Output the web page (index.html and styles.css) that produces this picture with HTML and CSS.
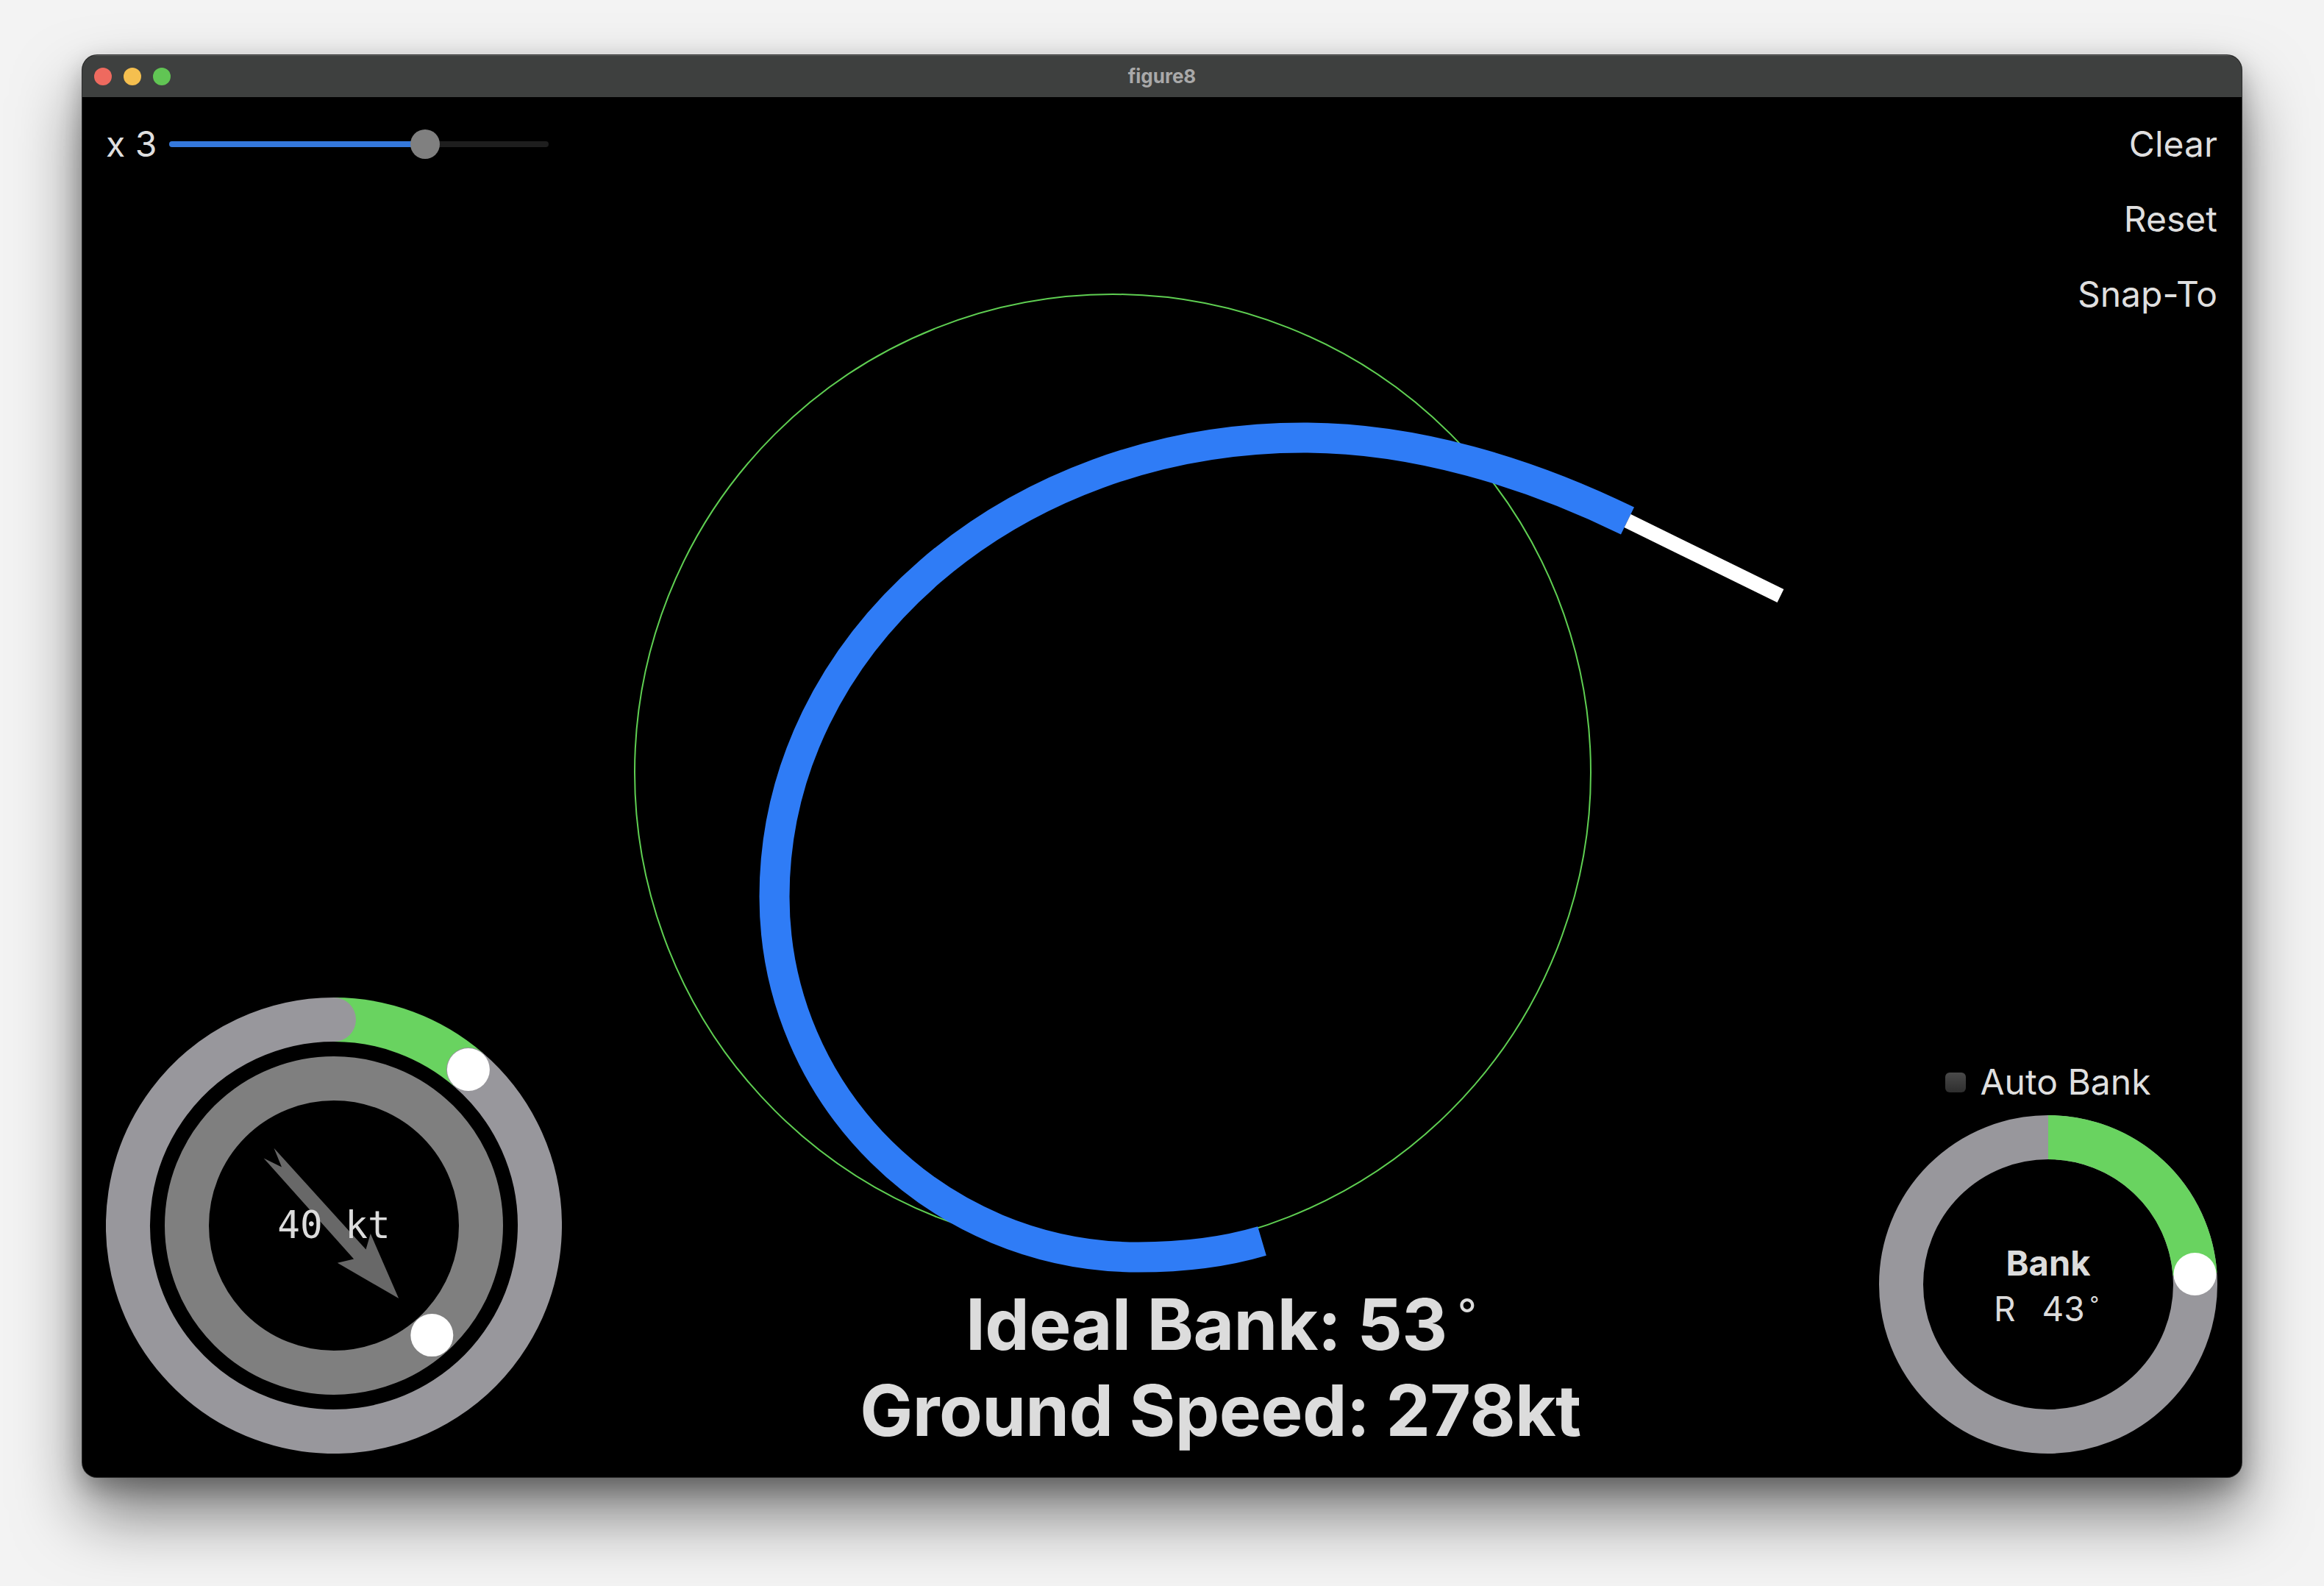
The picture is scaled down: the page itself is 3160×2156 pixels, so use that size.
FILE: index.html
```html
<!DOCTYPE html>
<html lang="en">
<head>
<meta charset="utf-8">
<title>figure8</title>
<link rel="stylesheet" href="styles.css">
</head>
<body>
<div class="window">
  <div class="titlebar">
    <div class="lights">
      <span class="light red"></span>
      <span class="light yellow"></span>
      <span class="light green"></span>
    </div>
    <div class="title">figure8</div>
    <div></div>
  </div>
  <div class="content">
    <svg class="canvas" viewBox="112 132 2936 1876" xmlns="http://www.w3.org/2000/svg">
      <circle class="target-circle" cx="1513" cy="1050" r="650"/>
      <path class="track" d="M1716 1687 C1662 1703 1604 1709 1548 1709 C1275 1709 1053 1490 1053 1219 C1053 874 1375 595 1773 595 C1923 595 2078 642 2213 708"/>
      <path class="heading" d="M2213 708 L2421 810"/>
    </svg>

    <div class="top-row">
      <div class="speed-control">
        <span class="mult">x 3</span>
        <div class="slider">
          <div class="slider-track"><div class="slider-fill" style="width:348px"></div></div>
          <div class="slider-thumb" style="left:328px"></div>
        </div>
      </div>
      <div class="actions">
        <button class="action">Clear</button>
        <button class="action">Reset</button>
        <button class="action">Snap-To</button>
      </div>
    </div>

    <div class="bottom-row">
      <div class="wind-gauge">
        <svg class="gauge-svg" viewBox="0 0 620 620" xmlns="http://www.w3.org/2000/svg">
          <path class="arc-green" d="M310 30 A280 280 0 0 1 492.9 98"/>
          <path class="arc-gray round" d="M492.9 98 A280 280 0 1 1 310 30"/>
          <circle class="ring-mid" cx="310" cy="310" r="200"/>
          <polygon class="wind-arrow" points="228.5,204.8 353.5,342.4 359.8,321 398.1,409 314.8,360.8 337.1,355.6 214.6,218.4 239,230.4"/>
          <circle class="knob" cx="492.9" cy="98" r="29"/>
          <circle class="knob" cx="443.3" cy="459.1" r="29"/>
        </svg>
        <div class="wind-label">40 kt</div>
      </div>

      <div class="readout">
        <div>Ideal Bank: 53<span class="deg"> °</span></div>
        <div>Ground Speed: 278kt</div>
      </div>

      <div class="bank-panel">
        <label class="auto-bank"><span class="checkbox"></span>Auto Bank</label>
        <div class="bank-gauge">
          <svg class="gauge-svg" viewBox="0 0 460 460" xmlns="http://www.w3.org/2000/svg">
            <circle class="arc-gray" cx="230" cy="230" r="200"/>
            <path class="arc-green" d="M230 30 A200 200 0 0 1 429.5 216.05"/>
            <circle class="knob" cx="429.5" cy="216" r="29"/>
          </svg>
          <div class="bank-label">
            <div class="bank-title">Bank</div>
            <div class="bank-value"><span class="bank-dir">R</span>43<span class="deg"> °</span></div>
          </div>
        </div>
      </div>
    </div>
  </div>
</div>
</body>
</html>
```

FILE: styles.css
```css
html, body {
  margin: 0;
  padding: 0;
}

body {
  width: 3160px;
  height: 2156px;
  overflow: hidden;
  background: #f3f3f3;
  font-family: Inter, "Noto Sans", "Liberation Sans", sans-serif;
}

.window {
  margin: 75px 0 0 112px;
  width: 2936px;
  height: 1933px;
  border-radius: 20px;
  overflow: hidden;
  background: #000;
  display: flex;
  flex-direction: column;
  box-shadow: 0 0 0 1px #2c2c2c, 0 50px 90px rgba(0, 0, 0, 0.5), 0 14px 34px rgba(0, 0, 0, 0.28);
}

.titlebar {
  flex: none;
  height: 57px;
  background: #3e403f;
  box-shadow: inset 0 1px 0 rgba(255, 255, 255, 0.18);
  display: grid;
  grid-template-columns: 1fr auto 1fr;
  align-items: center;
  padding: 0 16px;
}

.lights {
  display: flex;
  gap: 16px;
}

.light {
  width: 24px;
  height: 24px;
  border-radius: 50%;
}

.red { background: #ee6a5f; }
.yellow { background: #f5bf4f; }
.green { background: #61c554; }

.title {
  font-size: 26px;
  font-weight: 700;
  color: #a9a9a9;
}

.content {
  position: relative;
  flex: 1;
  display: flex;
  flex-direction: column;
  justify-content: space-between;
  padding: 35px 33px 32px 32px;
  color: #dfdfdf;
}

.canvas {
  position: absolute;
  left: 0;
  top: 0;
  width: 2936px;
  height: 1876px;
}

.target-circle {
  fill: none;
  stroke: #5fcf52;
  stroke-width: 2;
}

.track {
  fill: none;
  stroke: #2f7cf6;
  stroke-width: 41;
}

.heading {
  fill: none;
  stroke: #ffffff;
  stroke-width: 20;
}

.top-row,
.bottom-row {
  position: relative;
  display: flex;
  justify-content: space-between;
}

.top-row {
  align-items: flex-start;
}

.bottom-row {
  align-items: flex-end;
}

.speed-control {
  display: flex;
  align-items: center;
  gap: 17px;
}

.mult {
  font-size: 48px;
  line-height: 58px;
}

.slider {
  position: relative;
  width: 516px;
  height: 40px;
  display: flex;
  align-items: center;
}

.slider-track {
  width: 100%;
  height: 8px;
  border-radius: 4px;
  background: #1e1e1e;
  overflow: hidden;
}

.slider-fill {
  height: 100%;
  background: #3478dc;
}

.slider-thumb {
  position: absolute;
  top: 0;
  width: 40px;
  height: 40px;
  border-radius: 50%;
  background: #808080;
}

.actions {
  display: flex;
  flex-direction: column;
  align-items: flex-end;
  gap: 44px;
}

.action {
  margin: 0;
  padding: 0;
  border: 0;
  background: none;
  font: inherit;
  font-size: 48px;
  line-height: 58px;
  color: #dfdfdf;
}

.wind-gauge,
.bank-gauge {
  display: grid;
}

.wind-gauge {
  width: 620px;
  height: 620px;
}

.bank-gauge {
  width: 460px;
  height: 460px;
}

.gauge-svg {
  grid-area: 1 / 1;
  width: 100%;
  height: 100%;
}

.arc-green {
  fill: none;
  stroke: #69d360;
  stroke-width: 60;
}

.arc-gray {
  fill: none;
  stroke: #98979c;
  stroke-width: 60;
}

.arc-gray.round {
  stroke-linecap: round;
}

.ring-mid {
  fill: none;
  stroke: #7f7f7f;
  stroke-width: 60;
}

.wind-arrow {
  fill: #686868;
}

.knob {
  fill: #ffffff;
}

.wind-label {
  grid-area: 1 / 1;
  place-self: center;
  font-family: "DejaVu Sans Mono", "Liberation Mono", monospace;
  font-size: 51px;
  line-height: 60px;
  color: #dcdcdc;
  white-space: pre;
}

.readout {
  text-align: center;
  font-size: 96px;
  font-weight: 700;
  line-height: 117px;
  letter-spacing: -0.6px;
  color: #dcdcdc;
}

.deg {
  font-size: 0.6em;
  font-weight: 400;
  line-height: 0;
  vertical-align: 0.49em;
  letter-spacing: -2px;
}

.bank-panel {
  display: flex;
  flex-direction: column;
  align-items: center;
  gap: 16px;
}

.auto-bank {
  display: flex;
  align-items: center;
  gap: 19px;
  font-size: 48px;
  line-height: 58px;
  color: #dfdfdf;
}

.checkbox {
  width: 28px;
  height: 27px;
  border-radius: 6px;
  background: linear-gradient(#4a4a4a, #2e2e2e);
}

.bank-label {
  grid-area: 1 / 1;
  place-self: center;
  text-align: center;
  padding-top: 4px;
  color: #dcdcdc;
}

.bank-title {
  font-size: 47px;
  font-weight: 700;
  line-height: 62px;
}

.bank-value {
  font-size: 46px;
  line-height: 62px;
  white-space: pre;
  padding-right: 6px;
}

.bank-value .deg {
  letter-spacing: -1px;
}

.bank-dir {
  margin-right: 36px;
}
```
